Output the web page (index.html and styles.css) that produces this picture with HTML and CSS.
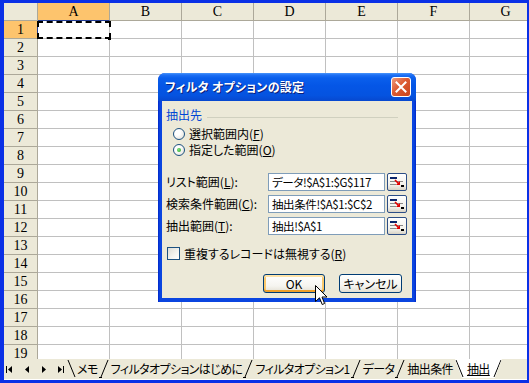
FILE: index.html
```html
<!DOCTYPE html>
<html lang="ja">
<head>
<meta charset="utf-8">
<link rel="stylesheet" href="styles.css">
</head>
<body>
<div class="window">
  <div class="sheet">
    <div class="grid">
      <div class="corner"></div><div class="ch on">A</div><div class="ch">B</div><div class="ch">C</div><div class="ch">D</div><div class="ch">E</div><div class="ch">F</div><div class="ch">G</div>
      <div class="rh on">1</div><div class="cell sel"></div><div class="cell"></div><div class="cell"></div><div class="cell"></div><div class="cell"></div><div class="cell"></div><div class="cell"></div>
      <div class="rh">2</div><div class="cell"></div><div class="cell"></div><div class="cell"></div><div class="cell"></div><div class="cell"></div><div class="cell"></div><div class="cell"></div>
      <div class="rh">3</div><div class="cell"></div><div class="cell"></div><div class="cell"></div><div class="cell"></div><div class="cell"></div><div class="cell"></div><div class="cell"></div>
      <div class="rh">4</div><div class="cell"></div><div class="cell"></div><div class="cell"></div><div class="cell"></div><div class="cell"></div><div class="cell"></div><div class="cell"></div>
      <div class="rh">5</div><div class="cell"></div><div class="cell"></div><div class="cell"></div><div class="cell"></div><div class="cell"></div><div class="cell"></div><div class="cell"></div>
      <div class="rh">6</div><div class="cell"></div><div class="cell"></div><div class="cell"></div><div class="cell"></div><div class="cell"></div><div class="cell"></div><div class="cell"></div>
      <div class="rh">7</div><div class="cell"></div><div class="cell"></div><div class="cell"></div><div class="cell"></div><div class="cell"></div><div class="cell"></div><div class="cell"></div>
      <div class="rh">8</div><div class="cell"></div><div class="cell"></div><div class="cell"></div><div class="cell"></div><div class="cell"></div><div class="cell"></div><div class="cell"></div>
      <div class="rh">9</div><div class="cell"></div><div class="cell"></div><div class="cell"></div><div class="cell"></div><div class="cell"></div><div class="cell"></div><div class="cell"></div>
      <div class="rh">10</div><div class="cell"></div><div class="cell"></div><div class="cell"></div><div class="cell"></div><div class="cell"></div><div class="cell"></div><div class="cell"></div>
      <div class="rh">11</div><div class="cell"></div><div class="cell"></div><div class="cell"></div><div class="cell"></div><div class="cell"></div><div class="cell"></div><div class="cell"></div>
      <div class="rh">12</div><div class="cell"></div><div class="cell"></div><div class="cell"></div><div class="cell"></div><div class="cell"></div><div class="cell"></div><div class="cell"></div>
      <div class="rh">13</div><div class="cell"></div><div class="cell"></div><div class="cell"></div><div class="cell"></div><div class="cell"></div><div class="cell"></div><div class="cell"></div>
      <div class="rh">14</div><div class="cell"></div><div class="cell"></div><div class="cell"></div><div class="cell"></div><div class="cell"></div><div class="cell"></div><div class="cell"></div>
      <div class="rh">15</div><div class="cell"></div><div class="cell"></div><div class="cell"></div><div class="cell"></div><div class="cell"></div><div class="cell"></div><div class="cell"></div>
      <div class="rh">16</div><div class="cell"></div><div class="cell"></div><div class="cell"></div><div class="cell"></div><div class="cell"></div><div class="cell"></div><div class="cell"></div>
      <div class="rh">17</div><div class="cell"></div><div class="cell"></div><div class="cell"></div><div class="cell"></div><div class="cell"></div><div class="cell"></div><div class="cell"></div>
      <div class="rh">18</div><div class="cell"></div><div class="cell"></div><div class="cell"></div><div class="cell"></div><div class="cell"></div><div class="cell"></div><div class="cell"></div>
      <div class="rh">19</div><div class="cell"></div><div class="cell"></div><div class="cell"></div><div class="cell"></div><div class="cell"></div><div class="cell"></div><div class="cell"></div>
    </div>
  </div>

  <div class="tabbar">
    <div class="nav">
      <svg width="7" height="7" viewBox="0 0 7 7"><rect x="0" y="0" width="1" height="7" fill="#000"/><path d="M6 0 L2 3.5 L6 7 Z" fill="#000"/></svg>
      <svg width="5" height="7" viewBox="0 0 5 7"><path d="M4 0 L0 3.5 L4 7 Z" fill="#000"/></svg>
      <svg width="5" height="7" viewBox="0 0 5 7"><path d="M1 0 L5 3.5 L1 7 Z" fill="#000"/></svg>
      <svg width="7" height="7" viewBox="0 0 7 7"><path d="M1 0 L5 3.5 L1 7 Z" fill="#000"/><rect x="6" y="0" width="1" height="7" fill="#000"/></svg>
    </div>
    <div class="tabs">
      <svg class="sep" width="9" height="19" viewBox="0 0 9 19"><path d="M1 1 L8 18" stroke="#000" fill="none"/></svg>
      <span class="tab">メモ</span>
      <svg class="sep" width="11" height="19" viewBox="0 0 11 19"><path d="M2 18 L9 1 M0 18.5 H3" stroke="#000" fill="none"/></svg>
      <span class="tab">フィルタオプションはじめに</span>
      <svg class="sep" width="11" height="19" viewBox="0 0 11 19"><path d="M2 18 L9 1 M0 18.5 H3" stroke="#000" fill="none"/></svg>
      <span class="tab">フィルタオプション1</span>
      <svg class="sep" width="11" height="19" viewBox="0 0 11 19"><path d="M2 18 L9 1 M0 18.5 H3" stroke="#000" fill="none"/></svg>
      <span class="tab">データ</span>
      <svg class="sep" width="11" height="19" viewBox="0 0 11 19"><path d="M2 18 L9 1 M0 18.5 H3" stroke="#000" fill="none"/></svg>
      <span class="tab">抽出条件</span>
      <span class="tab-active">
        <svg class="sep" width="9" height="19" viewBox="0 0 9 19"><path d="M1 1 L8 18" stroke="#000" fill="none"/></svg>
        <span class="tab cur">抽出</span>
        <svg class="sep" width="9" height="19" viewBox="0 0 9 19"><path d="M1 18 L8 1" stroke="#000" fill="none"/></svg>
      </span>
    </div>
  </div>

  <div class="dialog">
    <div class="titlebar">
      <span class="title">フィルタ オプションの設定</span>
      <span class="close"><svg width="12" height="12" viewBox="0 0 12 12"><path d="M1.5 1.5 L10.5 10.5 M10.5 1.5 L1.5 10.5" stroke="#fff" stroke-width="2" stroke-linecap="square"/></svg></span>
    </div>
    <div class="dbody">
      <div class="ghead"><span>抽出先</span><span class="rule"></span></div>
      <div class="radio"><span class="rb"></span><span>選択範囲内(<u>F</u>)</span></div>
      <div class="radio"><span class="rb on"></span><span>指定した範囲(<u>O</u>)</span></div>

      <div class="field first"><span class="lbl">リスト範囲(<u>L</u>):</span><span class="inp">データ!$A$1:$G$117</span><span class="ref"><svg width="16" height="12" viewBox="0 0 16 12"><rect x="1" y="1" width="7" height="2" fill="#0A246A"/><path d="M1 5.5 H14 M1 8.5 H7" stroke="#8A8A8A"/><path d="M6 4 L10 8" stroke="#E00000" stroke-width="1.6"/><path d="M7 9 L11 9 L11 5 Z" fill="#E00000"/><rect x="12" y="9" width="3" height="2" fill="#000"/></svg></span></div>
      <div class="field"><span class="lbl">検索条件範囲(<u>C</u>):</span><span class="inp">抽出条件!$A$1:$C$2</span><span class="ref"><svg width="16" height="12" viewBox="0 0 16 12"><rect x="1" y="1" width="7" height="2" fill="#0A246A"/><path d="M1 5.5 H14 M1 8.5 H7" stroke="#8A8A8A"/><path d="M6 4 L10 8" stroke="#E00000" stroke-width="1.6"/><path d="M7 9 L11 9 L11 5 Z" fill="#E00000"/><rect x="12" y="9" width="3" height="2" fill="#000"/></svg></span></div>
      <div class="field"><span class="lbl">抽出範囲(<u>T</u>):</span><span class="inp">抽出!$A$1</span><span class="ref"><svg width="16" height="12" viewBox="0 0 16 12"><rect x="1" y="1" width="7" height="2" fill="#0A246A"/><path d="M1 5.5 H14 M1 8.5 H7" stroke="#8A8A8A"/><path d="M6 4 L10 8" stroke="#E00000" stroke-width="1.6"/><path d="M7 9 L11 9 L11 5 Z" fill="#E00000"/><rect x="12" y="9" width="3" height="2" fill="#000"/></svg></span></div>

      <div class="check"><span class="cb"></span><span>重複するレコードは無視する(<u>R</u>)</span></div>

      <div class="buttons"><span class="btn default">OK</span><span class="btn">キャンセル</span></div>
    </div>
  </div>

  <svg class="cursor" width="13" height="21" viewBox="0 0 13 21"><path d="M0.5 0.5 L0.5 16.5 L4.5 12.8 L7.2 19.5 L9.6 18.5 L7 12 L12 12 Z" fill="#fff" stroke="#000" stroke-linejoin="miter"/></svg>
</div>
</body>
</html>
```

FILE: styles.css
```css
html, body {
  margin: 0;
  padding: 0;
}
body {
  width: 529px;
  height: 383px;
  overflow: hidden;
  font-family: "Noto Sans CJK JP", sans-serif;
}
.window {
  position: relative;
  width: 529px;
  height: 383px;
  box-sizing: border-box;
  border-style: solid;
  border-color: #0A30E6;
  border-width: 3px 2px 3px 4px;
  background: #ECE9D8;
  display: flex;
  flex-direction: column;
  overflow: hidden;
}
.sheet {
  height: 356px;
  flex: none;
  overflow: hidden;
  background: #fff;
}
.grid {
  display: grid;
  grid-template-columns: 34px repeat(7, 72px);
  grid-auto-rows: 18px;
}
.corner, .ch, .rh {
  box-sizing: border-box;
  background: #ECE9D8;
  border-right: 1px solid #ACA899;
  border-bottom: 1px solid #ACA899;
  font-family: "Liberation Serif", serif;
  font-size: 14px;
  color: #000;
  display: flex;
  align-items: center;
  justify-content: center;
  line-height: 1;
}
.ch.on, .rh.on {
  background: #FDC46D;
}
.ch.on { border-bottom-color: #1F3A93; }
.rh.on { border-right-color: #1F3A93; }
.cell {
  box-sizing: border-box;
  border-right: 1px solid #C0C0C0;
  border-bottom: 1px solid #C0C0C0;
  background: #fff;
}
.cell.sel {
  position: relative;
}
.cell.sel::after {
  content: "";
  position: absolute;
  left: -1px;
  top: 0;
  right: -2px;
  bottom: -1px;
  border: 2px dashed #000;
}
.cell.sel::before {
  content: "";
  position: absolute;
  right: -2px;
  bottom: -2px;
  width: 3px;
  height: 3px;
  background: #000;
  z-index: 1;
}

/* tab bar */
.tabbar {
  height: 20px;
  flex: none;
  display: flex;
  align-items: stretch;
  background: #ECE9D8;
  border-bottom: 1px solid #fff;
}
.nav {
  width: 63px;
  display: flex;
  align-items: center;
  padding-left: 2px;
  box-sizing: border-box;
}
.nav svg { display: block; margin-top: 1px; }
.nav svg:nth-child(2) { margin-left: 12px; }
.nav svg:nth-child(3) { margin-left: 11px; }
.nav svg:nth-child(4) { margin-left: 11px; }
.tabs {
  display: flex;
  align-items: flex-start;
}
.sep {
  display: block;
  flex: none;
}
.tab {
  font-size: 12px;
  font-feature-settings: "palt";
  line-height: 19px;
  height: 19px;
  white-space: nowrap;
  color: #000;
  padding: 0 1px;
  letter-spacing: -0.6px;
}
.tab-active {
  display: flex;
  background: #fff;
  clip-path: polygon(0 0, 100% 0, calc(100% - 7px) 100%, 7px 100%);
  margin-left: 1px;
}
.tab.cur {
  text-decoration: underline;
  padding: 0 3px;
}

/* dialog */
.dialog {
  position: absolute;
  left: 154px;
  top: 70px;
  width: 258px;
  height: 229px;
  box-sizing: border-box;
  background: linear-gradient(90deg, #0026C8, #0A45E0 2px, #0A45E0 calc(100% - 2px), #0026C8);
  border-radius: 7px 7px 0 0;
  display: flex;
  flex-direction: column;
  font-size: 12px;
  color: #000;
}
.titlebar {
  height: 28px;
  flex: none;
  display: flex;
  align-items: center;
  padding: 0 5px 0 7px;
  border-radius: 7px 7px 0 0;
  background: linear-gradient(#4A96FA 0, #1E70F4 2px, #0A5FEC 5px, #0556E6 45%, #0553E0 80%, #0748CF 100%);
}
.title {
  color: #fff;
  font-weight: bold;
  font-size: 12px;
  font-feature-settings: "palt";
  letter-spacing: 0.3px;
  text-shadow: 1px 1px 0 #0A1F7A;
  line-height: 16px;
}
.close {
  margin-left: auto;
  width: 20px;
  height: 20px;
  box-sizing: border-box;
  border: 1px solid #fff;
  border-radius: 3px;
  background: linear-gradient(135deg, #EE9A7C 0, #DC5A32 45%, #C8441C 100%);
  display: flex;
  align-items: center;
  justify-content: center;
}
.close svg { display: block; }
.dbody {
  flex: 1;
  margin: 0 4px 4px;
  background: #ECE9D8;
  padding: 7px 4px 0 4px;
  font-feature-settings: "palt";
}
.ghead {
  display: flex;
  align-items: center;
  height: 14px;
  line-height: 14px;
  color: #0046D5;
}
.ghead .rule {
  flex: 1;
  height: 1px;
  background: #D0D0BF;
  margin: 4px 10px 0 5px;
}
.radio {
  display: flex;
  align-items: center;
  height: 16px;
  line-height: 16px;
  margin-left: 7px;
}
.ghead + .radio { margin-top: 4px; }
.rb {
  width: 12px;
  height: 12px;
  box-sizing: border-box;
  border: 1px solid #1C5180;
  border-radius: 50%;
  background: radial-gradient(circle at 35% 35%, #fff 30%, #DCDBD2 100%);
  margin-right: 4px;
  position: relative;
  flex: none;
}
.rb.on::after {
  content: "";
  position: absolute;
  left: 3px;
  top: 3px;
  width: 4px;
  height: 4px;
  border-radius: 50%;
  background: radial-gradient(circle at 40% 40%, #7DE07D, #21A121);
}
.field {
  display: flex;
  align-items: center;
  height: 18px;
  margin-top: 4px;
}
.field.first { margin-top: 15px; }
.lbl {
  width: 102px;
  flex: none;
  line-height: 18px;
  white-space: nowrap;
}
.inp {
  width: 117px;
  height: 18px;
  flex: none;
  box-sizing: border-box;
  border: 1px solid #7F9DB9;
  background: #fff;
  padding-left: 3px;
  font-size: 11.5px;
  letter-spacing: -0.4px;
  line-height: 16px;
  white-space: nowrap;
  overflow: hidden;
}
.ref {
  width: 20px;
  height: 18px;
  flex: none;
  margin-left: 2px;
  box-sizing: border-box;
  border: 1px solid #2C4E86;
  border-radius: 2px;
  background: linear-gradient(#FFFFFF, #F2F1EA 70%, #D8D3C6);
  display: flex;
  align-items: center;
  justify-content: center;
}
.ref svg { display: block; }
.check {
  display: flex;
  align-items: center;
  height: 15px;
  line-height: 15px;
  margin-top: 11px;
  margin-left: 1px;
}
.cb {
  width: 13px;
  height: 13px;
  box-sizing: border-box;
  border: 1px solid #1C5180;
  background: linear-gradient(135deg, #DCDCD5, #F4F4F0 60%, #fff);
  margin-right: 4px;
  flex: none;
}
.buttons {
  display: flex;
  justify-content: flex-end;
  gap: 14px;
  margin-top: 13px;
  padding-right: 6px;
}
.btn {
  height: 19px;
  box-sizing: border-box;
  border: 1px solid #003C74;
  border-radius: 3px;
  background: linear-gradient(#FFFFFF, #F5F4EF 65%, #E3DFD3);
  display: flex;
  align-items: center;
  justify-content: center;
  line-height: 16px;
  width: 63px;
}
.btn.default {
  width: 62px;
  box-shadow: inset 0 2px 0 #FFE3A8, inset 0 -2px 0 #F0A02A, inset 2px 0 0 #F9C86C, inset -2px 0 0 #F9C86C;
}
.cursor {
  position: absolute;
  left: 311px;
  top: 282px;
  display: block;
}
```
